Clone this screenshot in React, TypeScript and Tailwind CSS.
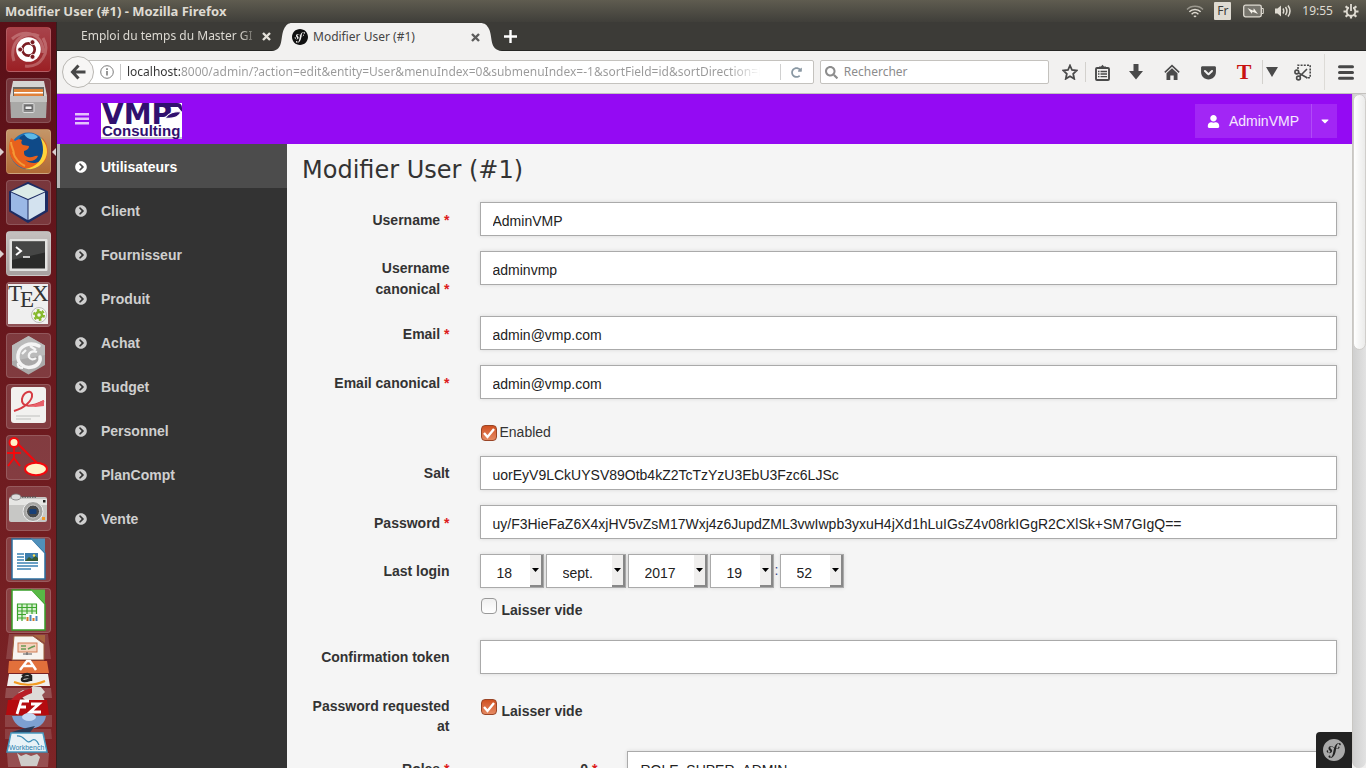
import type { ReactNode } from "react";
import { useState } from "react";
import {
  FaCaretDown,
  FaChevronCircleRight,
  FaGetPocket,
  FaRedoAlt,
  FaSearch,
  FaUser,
} from "react-icons/fa";
import { SiSymfony } from "react-icons/si";

/* ---------- System bar ---------- */

function SystemBar() {
  return (
    <header className="flex h-[22px] shrink-0 items-center justify-between bg-linear-to-b from-[#5f5c50] to-[#403f3a] pr-[7px] pl-[5px] text-[#dfdbd2]">
      <span className="text-[13px] leading-none font-bold">Modifier User (#1) - Mozilla Firefox</span>
      <div className="flex items-center">
        <svg width="18" height="16" viewBox="0 0 18 16" fill="none" stroke="#dfdbd2" strokeWidth="1.5" className="mr-[10px]">
          <path d="M1 6.5C5 2.200 13 2.200 17 6.500" opacity=".5" />
          <path d="M3.300 8.800C6.500 5.600 11.500 5.600 14.700 8.800" />
          <path d="M5.600 11.200C7.600 9.300 10.400 9.300 12.400 11.200" />
          <path d="M7.300 13L9 14.600 10.700 13C9.800 12.200 8.200 12.200 7.300 13Z" fill="#dfdbd2" stroke="none" />
        </svg>
        <span className="mr-3 flex h-[18px] w-[17px] items-center justify-center rounded-[1px] bg-[#dfdbd2] text-[12px] leading-none text-[#3c3b37]">
          Fr
        </span>
        <svg width="21" height="14" viewBox="0 0 21 14" className="mr-[10px]">
          <rect x=".7" y="1.200" width="17.600" height="11.600" rx="1.800" fill="#77756d" stroke="#dfdbd2" strokeWidth="1.300" />
          <path d="M19 4.500h1.300v5H19" fill="none" stroke="#dfdbd2" />
          <path d="M4.500 4L10.300 6.800 10.800 4.300 15 10 9.500 7.700 8.800 9.800Z" fill="#f5f2ea" />
        </svg>
        <svg width="18" height="16" viewBox="0 0 18 16" fill="none" stroke="#dfdbd2" strokeWidth="1.500" className="mr-[10px]">
          <path d="M1 5.500h2.500L7 2.500v11L3.500 10.500H1Z" fill="#dfdbd2" stroke="none" />
          <path d="M9 5.500q1.500 2.500 0 5M11.500 4q2.800 4 0 8M14 2.500q4 5.500 0 11" />
        </svg>
        <time className="mr-[10px] text-[12px] leading-none">19:55</time>
        <svg width="16" height="16" viewBox="0 0 16 16" fill="none" stroke="#dfdbd2">
          <circle cx="8" cy="8.500" r="4.300" strokeWidth="1.900" />
          <path
            d="M8 12.500V15.500M3.500 8.500H.5M12.500 8.500h3M4.800 11.700L2.700 13.800M11.200 11.700l2.100 2.100M4.800 5.300L2.700 3.200M11.200 5.300l2.100-2.100"
            strokeWidth="2.200"
          />
          <path d="M8 1V7" stroke="#504e47" strokeWidth="4" />
          <path d="M8 1V8" strokeWidth="1.800" />
        </svg>
      </div>
    </header>
  );
}

/* ---------- Launcher ---------- */

const launcherApps: { name: string; tile: string; running?: boolean; focused?: boolean; art: ReactNode }[] = [
  {
    name: "Dash",
    tile: "bg-linear-to-b from-[#a8434b] to-[#9b1f24]",
    art: (
      <>
        <path d="M8 34C2 16 18 2 33 9M37 11c8 14-2 30-18 28M6 12C20 0 38 8 37 26" stroke="#d9a0a0" strokeWidth="3" fill="none" opacity=".45" />
        <circle cx="22.500" cy="22.500" r="12.300" fill="#fff" />
        <circle cx="22.500" cy="22.500" r="6.200" fill="none" stroke="#7b1c22" strokeWidth="2.700" />
        <g fill="#7b1c22" stroke="#fff" strokeWidth=".9">
          <circle cx="14.200" cy="22.500" r="2.500" />
          <circle cx="26.500" cy="15.200" r="2.500" />
          <circle cx="26.500" cy="29.800" r="2.500" />
        </g>
      </>
    ),
  },
  {
    name: "Fichiers",
    tile: "bg-white/15",
    art: (
      <>
        <path d="M7 3h31l3 15H4Z" fill="#d5d4d2" />
        <path d="M7 9h31v10H7Z" fill="#6a655f" />
        <path d="M8 11h29v8H8Z" fill="#e0813a" />
        <path d="M8 14h29v1.500H8Z" fill="#fff" />
        <path d="M4 19h37l-1 21H5Z" fill="#a9a9a7" />
        <path d="M4 18h37v6H4Z" fill="#c4c4c2" />
        <rect x="17" y="25.500" width="11" height="9" rx="1" fill="#888" stroke="#ddd" />
        <rect x="19" y="28" width="7" height="3.500" fill="#eee" stroke="#444" strokeWidth=".8" />
      </>
    ),
  },
  {
    name: "Firefox",
    tile: "bg-linear-to-b from-[#c49668] to-[#b06b35]",
    running: true,
    focused: true,
    art: (
      <>
        <circle cx="22.500" cy="22" r="18.500" fill="#1d6fb4" />
        <path d="M14 8c8-6 20-3 24 6 3 10-3 20-12 22C15 30 10 18 14 8Z" fill="#0f4a88" />
        <path d="M18 5c6-2 12 0 14 3-4 4-11 3-14-3Z" fill="#5db9e6" />
        <path
          d="M5 9c2 1 3 2 4 3 3-2 5-2 7-1-1 2-1 4 1 5l6 1c0 3-2 4-5 5 0 3 0 5 4 6 5 1 7-2 10-1-2 5-8 6-13 4 6 5 16 4 19-4 3-6 2-13-3-19 7 5 8 14 5 22C35 39 22 43 13 37 3 31 1 19 5 9Z"
          fill="#e8601c"
        />
        <path d="M34 8c8 7 9 17 4 24-5 7-12 9-19 8 12-2 18-10 18-19 0-5-1-9-3-13Z" fill="#ffd43a" />
        <path d="M5 13c0 5 3 8 3 12M7 23c2 7 6 11 12 14" stroke="#f49a36" strokeWidth="2" fill="none" />
      </>
    ),
  },
  {
    name: "NetBeans",
    tile: "bg-white/15",
    art: (
      <>
        <path d="M22 3L41 12V31L22 42 4 31V12Z" fill="#1d2c63" stroke="#1d2c63" strokeWidth="2" strokeLinejoin="round" />
        <path d="M22 4L39 11.500 22 19 5 11.500Z" fill="#dcebe8" />
        <path d="M5 12.500L21.500 20V40L5 30.500Z" fill="#9bb8e6" />
        <path d="M39 12.500L22.500 20V40L39 30.500Z" fill="#d3e2ef" />
      </>
    ),
  },
  {
    name: "Terminal",
    tile: "bg-linear-to-b from-[#c4bfbe] to-[#a8a1a0]",
    running: true,
    art: (
      <>
        <rect x="3.500" y="8" width="38" height="32" rx="1" fill="#e2e2e0" />
        <rect x="6" y="10.500" width="33" height="27" fill="#2a2b2a" />
        <path d="M6 10.500h33v11L6 29Z" fill="#454645" />
        <path d="M10 16l5 4-5 4" stroke="#fff" strokeWidth="2" fill="none" />
        <path d="M17 26h7" stroke="#fff" strokeWidth="1.500" />
      </>
    ),
  },
  {
    name: "Texmaker",
    tile: "bg-white/25",
    art: (
      <>
        <rect x="2" y="2" width="40" height="40" fill="#efefef" />
        <g fill="#333" fontFamily="Liberation Serif, serif" fontSize="23">
          <text x="2" y="19">T</text>
          <text x="14" y="25">E</text>
          <text x="26" y="19">X</text>
        </g>
        <circle cx="33" cy="33" r="7.500" fill="#f5f5f2" stroke="#bbb" />
        <circle cx="33" cy="33" r="3" fill="none" stroke="#86b92d" strokeWidth="2.500" />
        <circle cx="33" cy="33" r="5" fill="none" stroke="#86b92d" strokeWidth="2" strokeDasharray="2.600 2.600" />
      </>
    ),
  },
  {
    name: "Gecko",
    tile: "bg-white/15",
    art: (
      <>
        <path d="M22.500 3L39 12.500V32L22.500 41.500 6 32V12.500Z" fill="#aaa9a9" />
        <path d="M22.500 3L39 12.500V22L6 28V12.500Z" fill="#bbb" />
        <path d="M33 13C24 8 13 13 12 22c-1 8 6 14 14 12 6-1 9-6 8-10" fill="none" stroke="#f5f5f5" strokeWidth="3.500" strokeLinecap="round" />
        <path d="M31 19c-5-2-9 1-8 5 1 3 5 3 7 1M12 30c-1 3 1 5 5 5M20 17l-4 4M24 13l6 4" stroke="#f5f5f5" strokeWidth="2.200" fill="none" />
      </>
    ),
  },
  {
    name: "Evince",
    tile: "bg-white/15",
    art: (
      <>
        <rect x="5" y="3" width="35" height="36" rx="3" fill="#f2f1ef" />
        <path d="M8 27C18 24 27 17 26 10c-2-5-9-1-10 5-1 8 8 9 22 2" fill="none" stroke="#d63a42" strokeWidth="2" />
        <path d="M20 20c5 3 10 0 18-4v6c-7 1-12 2-18-2Z" fill="#e8606a" />
        <path d="M10 32h24M10 35h15" stroke="#d8d8d6" strokeWidth="2" />
      </>
    ),
  },
  {
    name: "BOUML",
    tile: "bg-white/15",
    art: (
      <g stroke="#f4080c" strokeWidth="2">
        <path d="M8 12v12M1 18h14M8 23L2 31M8 23l6 8M12 9l20 20" fill="none" />
        <circle cx="8" cy="7.500" r="4.500" fill="#fff3c8" />
        <ellipse cx="30" cy="34" rx="11" ry="6.200" fill="#fff3c8" />
      </g>
    ),
  },
  {
    name: "Capture",
    tile: "bg-white/15",
    art: (
      <>
        <rect x="3" y="11" width="38" height="25" rx="2" fill="#c7c7c5" />
        <path d="M3 13h38v6H3Z" fill="#e6e6e4" />
        <ellipse cx="10" cy="11" rx="5" ry="3" fill="#ddd" stroke="#777" strokeWidth=".8" />
        <path d="M16 11h14" stroke="#555" strokeDasharray="1.500 1" strokeWidth="1.500" />
        <circle cx="27" cy="25.500" r="10" fill="#a5a5a3" stroke="#eee" />
        <circle cx="27" cy="25.500" r="6.500" fill="#46484a" stroke="#ccc" />
        <rect x="23.500" y="23" width="7" height="5" rx="1" fill="#173f77" />
        <rect x="37" y="14" width="2.500" height="2.500" fill="#222" />
        <rect x="36" y="31" width="3" height="3" fill="#f19a2a" />
      </>
    ),
  },
  {
    name: "Writer",
    tile: "bg-white/15",
    art: (
      <>
        <path d="M6 2h20l13 14v26H6Z" fill="#fff" stroke="#2a6fa0" strokeWidth="1.500" />
        <path d="M25 1.500h14V16Z" fill="#5090ba" />
        <path d="M11 17h7M11 20h7M11 23h7M11 26h21M11 29h21M11 32h14" stroke="#3b82b4" strokeWidth="1.500" />
        <rect x="19" y="16" width="13" height="8" fill="#3c7dac" />
        <path d="M19 24l4-4 3 2 3-3 3 2v3Z" fill="#345a34" />
        <circle cx="28" cy="18.500" r="1.200" fill="#ffe14d" />
      </>
    ),
  },
  {
    name: "Calc",
    tile: "bg-white/15",
    art: (
      <>
        <path d="M6 2h20l13 14v26H6Z" fill="#fff" stroke="#379e28" strokeWidth="1.500" />
        <path d="M25 1.500h14V16Z" fill="#58b846" />
        <rect x="11" y="16" width="20" height="16" fill="#d8f0d2" />
        <path d="M11 16h20M11 19.500h20M11 23h20M11 26.500h20M11 30h20M11.500 16v17M16 16v17M21 16v17M26 16v17M30.500 16v10" stroke="#3ca52d" strokeWidth="1.200" />
        <rect x="20" y="26" width="13" height="8" fill="#fff" />
        <path d="M21.500 33v-4M27.500 33v-3" stroke="#d37a28" strokeWidth="2" />
        <path d="M24.500 33v-6M30.500 33v-5" stroke="#4f87b9" strokeWidth="2" />
      </>
    ),
  },
];

function StackedApps() {
  return (
    <svg width="49" height="134" viewBox="0 0 49 134" aria-hidden="true" className="mt-px shrink-0">
      <path d="M5 0h39l3 25H2Z" fill="#fff" opacity=".15" />
      <path d="M10 2h19l11 8v16H8Z" fill="#f7f4f0" stroke="#9a5a38" />
      <path d="M29 1h12v8Z" fill="#a8653f" />
      <rect x="14" y="9" width="19" height="9" fill="#f4d2bd" stroke="#cf7c54" />
      <path d="M17 12h5M17 15h5M24 15l4-2 3-1" stroke="#6a9a55" strokeWidth="1.500" />
      <path d="M19 20h9M23 18v3" stroke="#555" />
      <path d="M5 27h38l2 12H4Z" fill="#e2703b" />
      <path d="M16 36l7-9h3l6 9M20 32h9" stroke="#fff" strokeWidth="2.500" fill="none" />
      <path d="M5 40h39l2 12H3Z" fill="#f0efed" />
      <path d="M18 42q6-4 9 0v5M27 43.500q-9-1-9 2t9 0" stroke="#222" strokeWidth="2.500" fill="none" />
      <path d="M10 48q15 6 31-1" stroke="#f29a20" strokeWidth="2" fill="none" />
      <path d="M2 54h45l1 10H1Z" fill="#fff" opacity=".2" />
      <path d="M14 59l5-3 4 2 6-6 8 1 4 5-3 3 3 6H22Z" fill="#dddbd7" />
      <path d="M6 67q8-10 22-13v5q-9 3-15 9Z" fill="#b81e25" />
      <path d="M4 66h39l2 15H2Z" fill="#b50b0f" />
      <path d="M25 67h-8l-4 13M14 73h8M27 70h8l-9 8h11" stroke="#fff" strokeWidth="2.800" fill="none" />
      <path d="M1 81l47 0 0 12H1Z" fill="#fff" opacity=".15" />
      <path d="M8 82h34q-2 12-17 13Q11 94 8 82Z" fill="#7da0d2" />
      <ellipse cx="25" cy="83" rx="7" ry="4" fill="#c5d9f3" />
      <path d="M1 95h46l1 10H1Z" fill="#fff" opacity=".13" />
      <path d="M8 98q9-3 23-6l-10 13H11Z" fill="#293b58" />
      <path d="M7 99h32l4 19H3Z" fill="#e8f2f7" stroke="#469ac1" strokeWidth="1.500" />
      <path d="M13 102c8-1 9 9 14 5 3-3 6-1 8 4" stroke="#3f8fb8" strokeWidth="1.300" fill="none" />
      <text x="5" y="116" fontFamily="Liberation Sans, sans-serif" fontSize="7" fill="#2a7fae">Workbench</text>
      <path d="M3 119h42l-1 14H4Z" fill="#fff" opacity=".2" />
      <path d="M13 119l4 3 5-2 5 2 6-2 3 3-3 9H17Z" fill="#cfcdca" />
    </svg>
  );
}

function Launcher() {
  return (
    <nav aria-label="Lanceur" className="flex w-[57px] shrink-0 flex-col overflow-hidden border-r border-[#33201f] bg-linear-to-b from-[#5a0f17] to-[#7d2426] pt-[5px]">
      {launcherApps.map((app) => (
        <button key={app.name} type="button" aria-label={app.name} className="mb-[6px] flex h-[45px] w-full shrink-0 items-center">
          <span className={`h-0 w-0 border-y-4 border-l-4 border-y-transparent ${app.running ? "border-l-[#dcd0cf]" : "border-l-transparent"}`} />
          <span className={`ml-[2px] block h-[45px] w-[45px] rounded-[4px] border border-white/15 ${app.tile}`}>
            <svg width="43" height="43" viewBox="1 1 43 43" className="overflow-visible">
              {app.art}
            </svg>
          </span>
          <span className={`ml-auto h-0 w-0 border-y-4 border-r-4 border-y-transparent ${app.focused ? "border-r-[#dcd0cf]" : "border-r-transparent"}`} />
        </button>
      ))}
      <div className="-mt-[6px] ml-1">
        <StackedApps />
      </div>
    </nav>
  );
}

/* ---------- Firefox chrome ---------- */

function CloseIcon({ color }: { color: string }) {
  return (
    <svg width="9" height="9" viewBox="0 0 9 9" stroke={color} strokeWidth="2.400">
      <path d="M1 1L8 8M8 1L1 8" />
    </svg>
  );
}

function TabStrip() {
  return (
    <div className="flex h-[29px] shrink-0 items-end border-b border-[#262624] bg-[#3c3b37] text-[12px]">
      <div className="flex h-7 w-[215px] items-center pl-6 text-[#dcd9d2]">
        <span className="w-[177px] overflow-hidden mask-r-from-90% whitespace-nowrap">Emploi du temps du Master GI</span>
        <button type="button" aria-label="Fermer l’onglet" className="ml-1">
          <CloseIcon color="#e4e1da" />
        </button>
      </div>
      <div className="-mb-px flex h-7 items-stretch text-[#454545]">
        <svg width="20" height="28" viewBox="0 0 20 28" fill="#f2f1f0">
          <path d="M0 28C12 27 8 14 12 6 14 2 16 0 20 0V28Z" />
        </svg>
        <div className="flex w-[188px] items-center bg-[#f2f1f0]">
          <SiSymfony size={16} color="#111" />
          <span className="ml-[5px]">Modifier User (#1)</span>
          <button type="button" aria-label="Fermer l’onglet" className="ml-auto">
            <CloseIcon color="#5c5c5c" />
          </button>
        </div>
        <svg width="22" height="28" viewBox="0 0 22 28" fill="#f2f1f0">
          <path d="M22 28C9 27 13 14 9 6 7 2 5 0 0 0V28Z" />
        </svg>
      </div>
      <button type="button" aria-label="Nouvel onglet" className="mb-[7px] ml-[2px]">
        <svg width="13" height="13" viewBox="0 0 13 13" stroke="#fff" strokeWidth="2.400">
          <path d="M6.500 0v13M0 6.500h13" />
        </svg>
      </button>
    </div>
  );
}

function ToolButton({ label, className, children }: { label: string; className: string; children: ReactNode }) {
  return (
    <button type="button" aria-label={label} className={`flex h-6 shrink-0 items-center justify-center text-[#4a4a4a] ${className}`}>
      {children}
    </button>
  );
}

function Toolbar() {
  const [url, setUrl] = useState(
    "localhost:8000/admin/?action=edit&entity=User&menuIndex=0&submenuIndex=-1&sortField=id&sortDirection=DESC&page=1",
  );
  return (
    <div className="flex h-[43px] shrink-0 items-center border-b border-[#c3c1bd] bg-[#f2f1f0] pl-[5px] text-[12px]">
      <button type="button" aria-label="Précédent" className="z-10 flex h-8 w-8 shrink-0 items-center justify-center rounded-full border border-[#b9b7b3] bg-[#f7f6f5]">
        <svg width="16" height="16" viewBox="0 0 16 16" fill="none" stroke="#474747" strokeWidth="3">
          <path d="M8.500 1.500L2.500 8l6 6.500M2.500 8H15.500" />
        </svg>
      </button>
      <div className="-ml-2 flex h-6 min-w-0 flex-[728] items-center rounded-[2px] border border-[#c4c2be] bg-white pl-[13px]">
        <svg width="14" height="14" viewBox="0 0 14 14" fill="none" stroke="#7d7d7d" className="shrink-0">
          <circle cx="7" cy="7" r="6.300" />
          <path d="M7 6v4.500M7 3.300v1.600" strokeWidth="1.600" />
        </svg>
        <span className="mx-[6px] h-4 w-px bg-[#c8c8c8]" />
        <input
          aria-label="Adresse"
          value={url}
          onChange={(e) => setUrl(e.target.value)}
          className="min-w-0 flex-1 bg-[linear-gradient(90deg,#333_0,#333_53px,#999_53px,#999_92%,transparent_97%)] bg-clip-text text-transparent outline-none"
        />
        <span className="h-4 w-px bg-[#d0d0d0]" />
        <button type="button" aria-label="Actualiser" className="flex w-8 shrink-0 justify-center">
          <FaRedoAlt size={11} color="#8a98a3" />
        </button>
      </div>
      <label className="ml-[6px] flex h-6 min-w-0 flex-[228] items-center rounded-[2px] border border-[#c4c2be] bg-white pl-1">
        <FaSearch size={13} color="#8d8d8d" className="shrink-0" />
        <input aria-label="Rechercher" placeholder="Rechercher" className="ml-[6px] w-full min-w-0 outline-none placeholder:text-[#8c8c8c]" />
      </label>
      <ToolButton label="Marquer cette page" className="ml-2 w-[26px]">
        <svg width="16" height="16" viewBox="0 0 16 16" fill="none" stroke="currentColor" strokeWidth="1.800">
          <path d="M8 1.500L10 6l4.800.5-3.600 3.300 1 5L8 12.300 3.800 14.800l1-5L1.200 6.500 6 6Z" />
        </svg>
      </ToolButton>
      <span className="ml-[2px] h-5 w-px bg-[#d3d1cd]" />
      <ToolButton label="Marque-pages" className="w-8">
        <svg width="15" height="17" viewBox="0 0 15 17" fill="none" stroke="currentColor" strokeWidth="1.900">
          <rect x="1" y="4" width="13" height="12" rx="1" />
          <path d="M3 7.500h1.500M5.500 7.500H12M3 10h1.500M5.500 10H12M3 12.700h1.500M5.500 12.700H12" strokeWidth="1.300" />
          <path d="M4 4V2.500h2L7.500.8 9 2.500h2V4Z" fill="currentColor" stroke="none" />
        </svg>
      </ToolButton>
      <ToolButton label="Téléchargements" className="w-9">
        <svg width="14" height="16" viewBox="0 0 14 16" fill="currentColor">
          <path d="M4.500 0h5v7H14L7 15.500 0 7h4.500Z" />
        </svg>
      </ToolButton>
      <ToolButton label="Accueil" className="w-9">
        <svg width="16" height="16" viewBox="0 0 16 16" fill="currentColor">
          <path d="M8 .5l7.700 7.300-1.100 1.100L8 2.800 1.400 8.900.3 7.800Z" />
          <path d="M8 4.300l5.500 5V16H9.700v-4.500H6.300V16H2.500V9.300Z" />
        </svg>
      </ToolButton>
      <ToolButton label="Pocket" className="w-9">
        <FaGetPocket size={17} />
      </ToolButton>
      <button type="button" aria-label="Texte" className="w-9 shrink-0 text-center font-['Liberation_Serif',serif] text-[22px] leading-6 font-bold text-[#c81210]">
        T
      </button>
      <ToolButton label="Plus d’options" className="w-[18px] border-l border-[#d3d1cd]">
        <svg width="12" height="10" viewBox="0 0 12 10" fill="currentColor">
          <path d="M0 0h12L6 10Z" />
        </svg>
      </ToolButton>
      <ToolButton label="Capture d’écran" className="w-11">
        <svg width="17" height="17" viewBox="0 0 17 17" fill="none" stroke="currentColor" strokeWidth="1.600">
          <path d="M4 5V1.200h12.200v12.500H12" strokeDasharray="2 1.200" />
          <circle cx="2.800" cy="8" r="1.900" />
          <circle cx="4.500" cy="14" r="1.900" />
          <path d="M4.500 9l9 5M5.500 12.500L13 5" />
        </svg>
      </ToolButton>
      <button type="button" aria-label="Menu" className="flex h-9 w-[42px] shrink-0 items-center justify-center border-l border-[#dddbd7]">
        <svg width="16" height="15" viewBox="0 0 16 15" stroke="#474747" strokeWidth="3" strokeLinecap="round">
          <path d="M1.500 1.800h13M1.500 7.500h13M1.500 13.200h13" />
        </svg>
      </button>
    </div>
  );
}

/* ---------- Admin page ---------- */

function VmpLogo() {
  return (
    <svg width="81" height="36" viewBox="0 0 81 36" role="img" aria-label="VMP Consulting" className="overflow-visible">
      <rect width="81" height="36" fill="#fff" />
      <rect y="34" width="81" height="2" fill="#c9c3d8" />
      <text x="1" y="21" fontFamily="DejaVu Sans, sans-serif" fontWeight="bold" fontSize="28" fill="#30106f">VMP</text>
      <path d="M55 0H76Q81 0 81 5V9L77 4H55Z" fill="#30106f" />
      <path d="M64 15C67 10 74 8 80 9 78 14 72 16 64 15Z" fill="#30106f" stroke="#fff" strokeWidth="1.200" />
      <text x="1" y="33" fontFamily="Liberation Sans, sans-serif" fontWeight="bold" fontSize="15" fill="#30106f">Consulting</text>
    </svg>
  );
}

function AdminHeader() {
  return (
    <header className="flex h-[50px] shrink-0 items-center justify-between bg-[#940af3] pr-[15px] pl-[18px] text-[14px] text-white">
      <div className="flex items-center">
        <button type="button" aria-label="Basculer le menu" className="mr-3 text-white/75">
          <svg width="14" height="12" viewBox="0 0 14 12" fill="currentColor">
            <path d="M0 0h14v2.500H0ZM0 4.500h14V7H0ZM0 9h14v2.500H0Z" />
          </svg>
        </button>
        <a href="#accueil" className="mt-1 block">
          <VmpLogo />
        </a>
      </div>
      <div className="mt-1 flex h-[34px] bg-[#a226f5]">
        <button type="button" className="flex items-center pr-3 pl-3 text-white/90">
          <FaUser size={13} className="mr-[9px] text-white" />
          AdminVMP
        </button>
        <button type="button" aria-label="Options du compte" className="flex w-[26px] items-center justify-center border-l border-[#b04bf7]">
          <FaCaretDown size={12} />
        </button>
      </div>
    </header>
  );
}

const menu = ["Utilisateurs", "Client", "Fournisseur", "Produit", "Achat", "Budget", "Personnel", "PlanCompt", "Vente"];

function Sidebar() {
  return (
    <nav aria-label="Menu principal" className="w-[230px] shrink-0 bg-[#333] text-[14px] font-bold">
      <ul>
        {menu.map((item, i) => (
          <li key={item}>
            <a
              href={`#${item.toLowerCase()}`}
              aria-current={i === 0 ? "page" : undefined}
              className={`flex h-11 items-center border-l-3 pt-[2px] pl-[15px] ${
                i === 0 ? "border-[#b5b5b5] bg-[#4c4c4c] text-white" : "border-transparent text-[#cfcfcf]"
              }`}
            >
              <FaChevronCircleRight size={12} className="mr-[14px]" />
              {item}
            </a>
          </li>
        ))}
      </ul>
    </nav>
  );
}

const fieldBox = "h-[34px] w-full border border-[#aaa] bg-white px-3 pt-1 text-[14px] text-[#222] shadow-[0_0_4px_rgba(0,0,0,0.12)] outline-none";

/* The no-break space keeps the mark on the line of the label's last word. */
function Star() {
  return <span className="leading-[23px] text-[#dd1c1c]">{"\u00a0*"}</span>;
}

function Row({ label, id, required, children }: { label?: string; id?: string; required?: boolean; children: ReactNode }) {
  return (
    <div className="mb-[15px] grid grid-cols-[1fr_5fr]">
      <div className="pt-[7px] pr-[15px] pl-5 text-right leading-5 font-bold">
        {label && (
          <label htmlFor={id}>
            {label}
            {required && <Star />}
          </label>
        )}
      </div>
      <div className="min-w-0 px-[15px]">{children}</div>
    </div>
  );
}

function TextRow({ label, id, value = "", required }: { label: string; id: string; value?: string; required?: boolean }) {
  return (
    <Row label={label} id={id} required={required}>
      <input id={id} type="text" defaultValue={value} className={`block ${fieldBox}`} />
    </Row>
  );
}

function CheckBox({ id, checked }: { id: string; checked?: boolean }) {
  return (
    <span className="relative ml-px block h-4 w-4">
      <input
        id={id}
        type="checkbox"
        defaultChecked={checked}
        className="peer block h-4 w-4 appearance-none rounded-[4px] border border-[#999] bg-linear-to-b from-[#f0f0f0] to-white checked:border-[#9a4526] checked:from-[#d0501f] checked:to-[#e58a62]"
      />
      <svg viewBox="0 0 16 16" className="pointer-events-none absolute inset-0 hidden h-4 w-4 peer-checked:block" fill="none" stroke="#fff" strokeWidth="2.400">
        <path d="M3 8l3.500 4L13 4" />
      </svg>
    </span>
  );
}

function DateSelect({ label, value, className, id }: { label: string; value: string; className: string; id?: string }) {
  return (
    <span className={`relative block h-[34px] ${className}`}>
      <select
        id={id}
        aria-label={label}
        className="block h-full w-full appearance-none border border-[#aaa] bg-white pt-[5px] pl-4 text-[14px] text-[#222] shadow-[0_0_4px_rgba(0,0,0,0.12)]"
      >
        <option>{value}</option>
      </select>
      <span className="pointer-events-none absolute top-px right-px bottom-px flex w-[13px] items-center justify-center border-r-2 border-b-2 border-[#888] bg-[#f0efee]">
        <svg width="7" height="4" viewBox="0 0 7 4">
          <path d="M0 0h7L3.500 4Z" />
        </svg>
      </span>
    </span>
  );
}

function UserForm() {
  return (
    <main className="relative min-w-0 flex-1 overflow-hidden bg-[#f5f5f5] text-[14px] text-[#333]">
      <h1 className="mt-2 mb-[14px] px-[15px] font-['DejaVu_Sans',sans-serif] text-[24px] leading-9">Modifier User (#1)</h1>
      <form>
        <TextRow label="Username" id="username" value="AdminVMP" required />
        <TextRow label="Username canonical" id="username-canonical" value="adminvmp" required />
        <TextRow label="Email" id="email" value="admin@vmp.com" required />
        <TextRow label="Email canonical" id="email-canonical" value="admin@vmp.com" required />
        <Row>
          <div className="flex h-[27px] items-end">
            <CheckBox id="enabled" checked />
            <label htmlFor="enabled" className="ml-[3px] leading-[18px]">
              Enabled
            </label>
          </div>
        </Row>
        <TextRow label="Salt" id="salt" value="uorEyV9LCkUYSV89Otb4kZ2TcTzYzU3EbU3Fzc6LJSc" />
        <TextRow label="Password" id="password" value="uy/F3HieFaZ6X4xjHV5vZsM17Wxj4z6JupdZML3vwIwpb3yxuH4jXd1hLuIGsZ4v08rkIGgR2CXlSk+SM7GIgQ==" required />
        <Row label="Last login" id="login-day">
          <div className="flex">
            <DateSelect id="login-day" label="Jour" value="18" className="mr-[2px] w-16" />
            <DateSelect label="Mois" value="sept." className="mr-[2px] w-20" />
            <DateSelect label="Année" value="2017" className="mr-[2px] w-20" />
            <DateSelect label="Heure" value="19" className="w-16" />
            <span className="w-[6px] pt-[6px] text-center text-[#3a4a8a]">:</span>
            <DateSelect label="Minute" value="52" className="w-16" />
          </div>
          <div className="flex h-[37px] items-start pt-[10px]">
            <CheckBox id="login-empty" />
            <label htmlFor="login-empty" className="ml-[5px] pt-[2px] leading-5 font-bold">
              Laisser vide
            </label>
          </div>
        </Row>
        <TextRow label="Confirmation token" id="token" />
        <Row label="Password requested at" id="requested-empty">
          <div className="flex items-start pt-[10px]">
            <CheckBox id="requested-empty" checked />
            <label htmlFor="requested-empty" className="ml-[5px] pt-[2px] leading-5 font-bold">
              Laisser vide
            </label>
          </div>
        </Row>
        <Row label="Roles" id="role-0" required>
          <div className="-mx-[15px] grid grid-cols-[1fr_5fr]">
            <label htmlFor="role-0" className="px-[15px] pt-[7px] text-right leading-5 font-bold">
              0<Star />
            </label>
            <div className="px-[15px]">
              <input id="role-0" type="text" defaultValue="ROLE_SUPER_ADMIN" className={`block ${fieldBox}`} />
            </div>
          </div>
        </Row>
      </form>
      <button type="button" aria-label="Barre de débogage Symfony" className="absolute right-0 bottom-0 flex h-9 w-9 items-center justify-center rounded-tl-[4px] bg-[#222]">
        <SiSymfony size={22} color="#aaa" />
      </button>
    </main>
  );
}

function Scrollbar() {
  return (
    <div aria-hidden="true" className="flex w-[14px] shrink-0 flex-col rounded-b-full border-l border-[#c9c7c3] bg-linear-to-r from-[#cfcfcf] to-[#e2e2e2]">
      <div className="h-[38%] rounded-full border border-[#d0cecb] bg-linear-to-r from-white to-[#ebebea]" />
    </div>
  );
}

export default function App() {
  return (
    <div className="flex h-screen flex-col overflow-hidden bg-[#f2f1f0] font-['Noto_Sans',sans-serif]">
      <SystemBar />
      <div className="flex min-h-0 flex-1">
        <Launcher />
        <div className="flex min-w-0 flex-1 flex-col">
          <TabStrip />
          <Toolbar />
          <div className="flex min-h-0 flex-1">
            <div className="flex min-w-0 flex-1 flex-col font-['Liberation_Sans',sans-serif]">
              <AdminHeader />
              <div className="flex min-h-0 flex-1">
                <Sidebar />
                <UserForm />
              </div>
            </div>
            <Scrollbar />
          </div>
        </div>
      </div>
    </div>
  );
}
